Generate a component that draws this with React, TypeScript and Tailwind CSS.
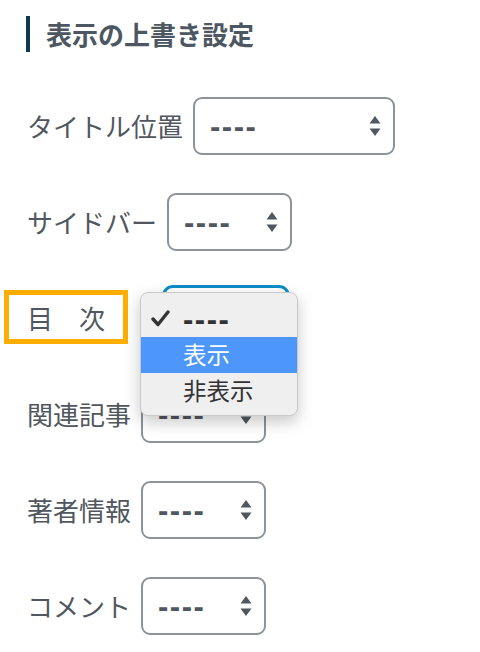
import React from "react";

const font = { fontFamily: '"Noto Sans CJK JP", "Noto Sans", sans-serif' };
const dashFont = { fontFamily: '"Liberation Sans", Arial, sans-serif' };

function Arrows() {
  return (
    <svg width="12" height="22" viewBox="0 0 12 22" className="shrink-0">
      <path d="M6 1 L11.5 8.5 L0.5 8.5 Z" fill="#50575e" />
      <path d="M6 21 L11.5 13.5 L0.5 13.5 Z" fill="#50575e" />
    </svg>
  );
}

function Select({ width }: { width: string }) {
  return (
    <div
      className={`${width} h-[58px] border-2 border-[#8c9399] rounded-[9px] bg-white flex items-center justify-between pl-[15px] pr-[12px]`}
    >
      <span className="text-[31px] text-[#50575e] tracking-[1.5px] font-bold leading-none" style={dashFont}>
        ----
      </span>
      <Arrows />
    </div>
  );
}

function Row({ label, width, gap = "ml-[10px]" }: { label: string; width: string; gap?: string }) {
  return (
    <div className="flex items-center h-[58px]">
      <span className="text-[26px] leading-none text-[#50575e]">{label}</span>
      <div className={gap}>
        <Select width={width} />
      </div>
    </div>
  );
}

export default function App() {
  return (
    <div className="w-[480px] h-[652px] bg-white relative overflow-hidden pl-[26px] pt-[16px]" style={font}>
      <div className="flex items-center h-[36px] border-l-4 border-[#0b3b50] pl-[16px]">
        <span className="text-[26px] font-bold text-[#4d5761] leading-none">表示の上書き設定</span>
      </div>
      <div className="mt-[45px] flex flex-col gap-[38px] pl-[1px]">
        <Row label="タイトル位置" width="w-[202px]" gap="ml-[10px]" />
        <Row label="サイドバー" width="w-[125px]" gap="ml-[10px]" />
        <div className="relative flex items-center h-[58px]">
          <div className="absolute left-[-23px] top-[1px] w-[124px] h-[54px] border-[5px] border-[#ffad00]" />
          <span className="text-[26px] leading-none text-[#50575e]">目　次</span>
          <div className="absolute left-[135px] top-[-4px] w-[128px] h-[62px] border-[3px] border-[#0b8dc6] rounded-[11px] bg-white" />
          <div className="absolute left-[113px] top-[3px] w-[158px] h-[124px] bg-[#efefef] border border-[#c9c9c9] rounded-[8px] shadow-[0_6px_16px_rgba(0,0,0,0.22)] pt-[9px] z-10">
            <div className="h-[35px] flex items-center relative text-[#333]">
              <svg className="absolute left-[10px] top-[8px]" width="19" height="17" viewBox="0 0 19 17">
                <path d="M2 9 L7 14.5 L17 2" fill="none" stroke="#333" strokeWidth="3.4" strokeLinecap="round" strokeLinejoin="round" />
              </svg>
              <span className="ml-[42px] text-[31px] font-bold tracking-[1.5px] leading-none" style={dashFont}>
                ----
              </span>
            </div>
            <div className="h-[36px] flex items-center bg-[#4d96fb] text-white">
              <span className="ml-[42px] text-[23.5px] leading-none">表示</span>
            </div>
            <div className="h-[36px] flex items-center text-[#333]">
              <span className="ml-[42px] text-[23.5px] leading-none">非表示</span>
            </div>
          </div>
        </div>
        <Row label="関連記事" width="w-[125px]" gap="ml-[10px]" />
        <Row label="著者情報" width="w-[125px]" gap="ml-[10px]" />
        <Row label="コメント" width="w-[125px]" gap="ml-[10px]" />
      </div>
    </div>
  );
}
